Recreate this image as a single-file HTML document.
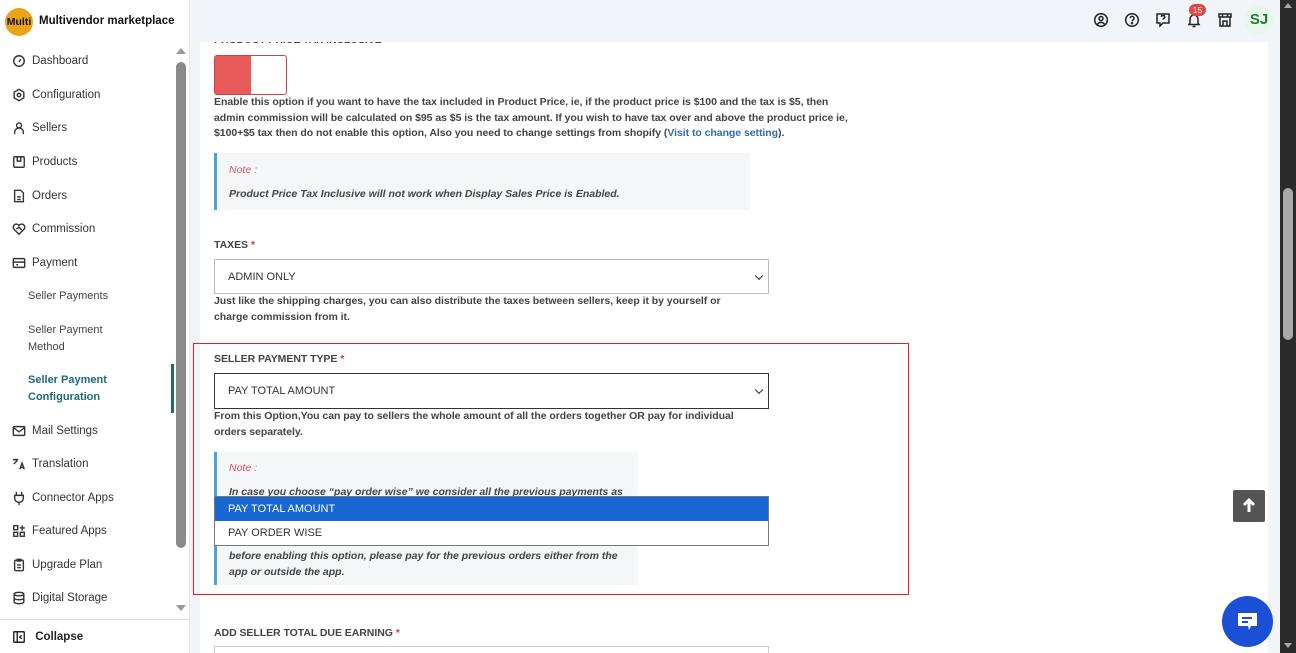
<!DOCTYPE html>
<html style="overflow:hidden;height:653px"><head><meta charset="utf-8"><style>
*{box-sizing:border-box;margin:0;padding:0}
body{width:1296px;height:653px;overflow:hidden;font-family:"Liberation Sans",sans-serif;background:#f1f4f9;position:relative;color:#444}
.abs{position:absolute}
.side{left:0;top:0;width:190px;height:653px;background:#fff;border-right:1px solid #e3e6ea}
.mi{position:absolute;left:12px;font-size:11.5px;color:#333;display:flex;align-items:center;gap:6px;white-space:nowrap}
.mi svg{width:14px;height:14px;fill:none;stroke:#333;stroke-width:1.6}
.sub{position:absolute;left:28px;font-size:11px;color:#444;line-height:17px}
.card{left:200px;top:42px;width:1068px;height:611px;background:#fff}
.t{position:absolute;font-size:10.5px;font-weight:bold;color:#444;line-height:15.5px;white-space:nowrap;letter-spacing:-0.05px}
.note{position:absolute;background:#f5f6f8;border-left:3px solid #4aa3d8}
.ni{position:absolute;font-size:10.5px;font-weight:bold;font-style:italic;color:#444;white-space:nowrap}
.sel{position:absolute;border:1px solid #bbb;background:#fff;font-size:11px;color:#333;padding-left:13px;display:flex;align-items:center}
.sel:after{content:"";position:absolute;right:6px;top:50%;width:5px;height:5px;border-right:1.6px solid #222;border-bottom:1.6px solid #222;transform:translateY(-70%) rotate(45deg)}
.req{color:#d33}
</style></head><body>
<div class="abs" style="left:186px;top:0;width:20px;height:20px;background:#f1f4f9;border-top-left-radius:14px"></div>
<div class="abs side">
 <div class="abs" style="left:5px;top:8px;width:28px;height:28px;border-radius:50%;background:#e8a317;font-size:10.5px;font-weight:bold;color:#111;display:flex;align-items:center;justify-content:center">Multi</div>
 <div class="abs" style="left:39px;top:15px;font-size:11.5px;font-weight:bold;color:#111">Multivendor marketplace</div>
 <div class="mi" style="top:54px"><svg viewBox="0 0 16 16"><circle cx="8" cy="8" r="6"/><path d="M8 9l2-3"/></svg>Dashboard</div>
 <div class="mi" style="top:88px"><svg viewBox="0 0 16 16"><path d="M8 1.5l5.5 3.2v6.6L8 14.5 2.5 11.3V4.7z"/><circle cx="8" cy="8" r="2"/></svg>Configuration</div>
 <div class="mi" style="top:121px"><svg viewBox="0 0 16 16"><circle cx="8" cy="5" r="2.8"/><path d="M3 15v-2a5 5 0 0110 0v2"/></svg>Sellers</div>
 <div class="mi" style="top:155px"><svg viewBox="0 0 16 16"><rect x="2" y="2" width="12" height="12" rx="1.5"/><path d="M6 2v5h4V2"/></svg>Products</div>
 <div class="mi" style="top:189px"><svg viewBox="0 0 16 16"><path d="M3 1.5h7l3 3v10H3z"/><path d="M6 9h4M6 12h4"/></svg>Orders</div>
 <div class="mi" style="top:222px"><svg viewBox="0 0 16 16"><path d="M8 14L2 8a3.5 3.5 0 016-4 3.5 3.5 0 016 4z"/><path d="M5 8l3-2 3 3"/></svg>Commission</div>
 <div class="mi" style="top:256px"><svg viewBox="0 0 16 16"><rect x="1.5" y="3" width="13" height="10" rx="1.5"/><path d="M1.5 7h13M5 10h2"/></svg>Payment</div>
 <div class="sub" style="top:288px">Seller Payments</div>
 <div class="sub" style="top:322px">Seller Payment<br>Method</div>
 <div class="sub" style="top:372px;color:#1e6b73;font-weight:bold">Seller Payment<br>Configuration</div>
 <div class="abs" style="left:171px;top:364px;width:3px;height:49px;background:#1e6b73"></div>
 <div class="mi" style="top:424px"><svg viewBox="0 0 16 16"><rect x="1.5" y="3" width="13" height="10" rx="1"/><path d="M1.5 4l6.5 5 6.5-5"/></svg>Mail Settings</div>
 <div class="mi" style="top:457px"><svg viewBox="0 0 16 16"><path d="M1 3h6M4 2v2M2 8l4-4M9 14l2.5-7 2.5 7M10 12h3"/></svg>Translation</div>
 <div class="mi" style="top:491px"><svg viewBox="0 0 16 16"><path d="M5 1v4M11 1v4M3 5h10v3a5 5 0 01-10 0zM8 13v3"/></svg>Connector Apps</div>
 <div class="mi" style="top:524px"><svg viewBox="0 0 16 16"><rect x="2" y="2" width="4.5" height="4.5"/><rect x="2" y="9.5" width="4.5" height="4.5"/><rect x="9.5" y="9.5" width="4.5" height="4.5"/><path d="M11.7 1.5v6M8.7 4.5h6"/></svg>Featured Apps</div>
 <div class="mi" style="top:558px"><svg viewBox="0 0 16 16"><rect x="3" y="2.5" width="10" height="12" rx="1.5"/><path d="M6 1.5h4v2H6zM6 8h4M6 11h4"/></svg>Upgrade Plan</div>
 <div class="mi" style="top:591px"><svg viewBox="0 0 16 16"><ellipse cx="8" cy="3.5" rx="5.5" ry="2"/><path d="M2.5 3.5v9c0 1.1 2.5 2 5.5 2s5.5-.9 5.5-2v-9M2.5 8c0 1.1 2.5 2 5.5 2s5.5-.9 5.5-2"/></svg>Digital Storage</div>
 <div class="abs" style="left:176px;top:48px;width:0;height:0;border-left:5px solid transparent;border-right:5px solid transparent;border-bottom:6px solid #999"></div>
 <div class="abs" style="left:176px;top:62px;width:10px;height:486px;border-radius:5px;background:#8a8a8a"></div>
 <div class="abs" style="left:176px;top:605px;width:0;height:0;border-left:5px solid transparent;border-right:5px solid transparent;border-top:6px solid #999"></div>
 <div class="abs" style="left:0;top:619px;width:190px;border-top:1px solid #ddd"></div>
 <div class="mi" style="top:630px;font-weight:bold;color:#222"><svg viewBox="0 0 16 16" style="stroke:#222"><rect x="2" y="2" width="12" height="12" rx="1"/><path d="M6 2v12M11 6l-2 2 2 2"/></svg>&nbsp;Collapse</div>
</div>
<!-- header icons -->
<svg class="abs" style="left:1093px;top:12px" width="16" height="16" viewBox="0 0 16 16" fill="none" stroke="#222" stroke-width="1.5"><circle cx="8" cy="8" r="6.3"/><circle cx="8" cy="6.5" r="2"/><path d="M4.5 12.5a4 4 0 017 0"/></svg>
<svg class="abs" style="left:1124px;top:12px" width="16" height="16" viewBox="0 0 16 16" fill="none" stroke="#222" stroke-width="1.5"><circle cx="8" cy="8" r="6.3"/><path d="M6.2 6.3a1.9 1.9 0 113 1.5c-.8.5-1.2.9-1.2 1.7"/><circle cx="8" cy="11.3" r=".5" fill="#222"/></svg>
<svg class="abs" style="left:1155px;top:12px" width="16" height="16" viewBox="0 0 16 16" fill="none" stroke="#222" stroke-width="1.5"><path d="M2 2h12v9H8l-3 3v-3H2z"/><path d="M6.5 5a1.6 1.6 0 112.3 1.4c-.6.3-.8.6-.8 1.2"/></svg>
<svg class="abs" style="left:1186px;top:12px" width="16" height="16" viewBox="0 0 16 16" fill="none" stroke="#222" stroke-width="1.5"><path d="M4 11V7a4 4 0 018 0v4l1 1.5H3z"/><path d="M6.5 14.5h3"/></svg>
<div class="abs" style="left:1189px;top:4px;width:17px;height:12px;border-radius:6px;background:#e04848;color:#fff;font-size:8.5px;text-align:center;line-height:12px">15</div>
<svg class="abs" style="left:1217px;top:12px" width="16" height="16" viewBox="0 0 16 16" fill="none" stroke="#222" stroke-width="1.5"><path d="M2 2h12v3H2zM3 5v9h10V5M6 14v-5h4v5M5.5 2v3M10.5 2v3"/></svg>
<div class="abs" style="left:1244px;top:5px;width:30px;height:30px;border-radius:50%;background:#e8f7ea;color:#1d7a3a;font-size:15px;font-weight:bold;text-align:center;line-height:30px">SJ</div>
<!-- card -->
<div class="abs card"></div>
<div class="abs" style="left:214px;top:42px;height:5px;overflow:hidden;width:300px"><div class="t" style="position:relative;top:-9px;left:0">PRODUCT PRICE TAX INCLUSIVE</div></div>
<div class="abs" style="left:214px;top:55px;width:73px;height:40px;border:1px solid #c44;border-radius:3px;background:#fff;overflow:hidden"><div style="width:36px;height:100%;background:#e95a5a"></div></div>
<div class="t" style="left:214px;top:95px">Enable this option if you want to have the tax included in Product Price, ie, if the product price is $100 and the tax is $5, then<br>admin commission will be calculated on $95 as $5 is the tax amount. If you wish to have tax over and above the product price ie,<br>$100+$5 tax then do not enable this option, Also you need to change settings from shopify (<span style="color:#2f6ea8">Visit to change setting</span>).</div>
<div class="note" style="left:214px;top:153px;width:536px;height:57px"></div>
<div class="ni" style="left:229px;top:164px;color:#d9534f;font-weight:normal">Note :</div>
<div class="ni" style="left:229px;top:188px">Product Price Tax Inclusive will not work when Display Sales Price is Enabled.</div>
<div class="t" style="left:214px;top:238px">TAXES <span class="req">*</span></div>
<div class="sel" style="left:214px;top:259px;width:555px;height:35px">ADMIN ONLY</div>
<div class="t" style="left:214px;top:294px">Just like the shipping charges, you can also distribute the taxes between sellers, keep it by yourself or<br>charge commission from it.</div>
<div class="abs" style="left:193px;top:343px;width:716px;height:252px;border:1.5px solid #f01818"></div>
<div class="t" style="left:214px;top:352px">SELLER PAYMENT TYPE <span class="req">*</span></div>
<div class="sel" style="left:214px;top:373px;width:555px;height:36px;border:1.5px solid #333">PAY TOTAL AMOUNT</div>
<div class="t" style="left:214px;top:409px">From this Option,You can pay to sellers the whole amount of all the orders together OR pay for individual<br>orders separately.</div>
<div class="note" style="left:214px;top:452px;width:424px;height:133px"></div>
<div class="ni" style="left:229px;top:462px;color:#d9534f;font-weight:normal">Note :</div>
<div class="ni" style="left:229px;top:486px">In case you choose “pay order wise” we consider all the previous payments as</div>
<div class="ni" style="left:229px;top:548px;line-height:16px">before enabling this option, please pay for the previous orders either from the<br>app or outside the app.</div>
<div class="abs" style="left:214px;top:496px;width:555px;height:50px;border:1px solid #777;background:#fff;font-size:11px">
 <div style="height:24px;background:#1967d2;color:#fff;padding-left:13px;line-height:24px">PAY TOTAL AMOUNT</div>
 <div style="padding-left:13px;line-height:24px;color:#333">PAY ORDER WISE</div>
</div>
<div class="t" style="left:214px;top:626px">ADD SELLER TOTAL DUE EARNING <span class="req">*</span></div>
<div class="abs" style="left:214px;top:646px;width:555px;height:7px;border:1px solid #ccc;border-bottom:none;background:#fff"></div>
<div class="abs" style="left:1233px;top:490px;width:32px;height:32px;border-radius:2px;background:#555"><svg width="32" height="32" viewBox="0 0 32 32"><path d="M16 10v12M11 15l5-5 5 5" stroke="#fff" stroke-width="3" fill="none"/></svg></div>
<div class="abs" style="left:1222px;top:596px;width:51px;height:51px;border-radius:50%;background:#1a4fd6"><svg width="51" height="51" viewBox="0 0 51 51"><path d="M16 17h19v13h-6l-2 4-1-4H16z" fill="#fff"/><path d="M20 22h10M20 26h6" stroke="#1a4fd6" stroke-width="2"/></svg></div>
<div class="abs" style="left:1280px;top:0;width:16px;height:653px;background:#2b2b2b"></div>
<div class="abs" style="left:1283px;top:188px;width:10px;height:152px;border-radius:5px;background:#a8a8a8"></div>
<div class="abs" style="left:1284px;top:3px;border-left:4px solid transparent;border-right:4px solid transparent;border-bottom:5px solid #aaa"></div>
<div class="abs" style="left:1284px;top:643px;border-left:4px solid transparent;border-right:4px solid transparent;border-top:5px solid #aaa"></div>
</body></html>
